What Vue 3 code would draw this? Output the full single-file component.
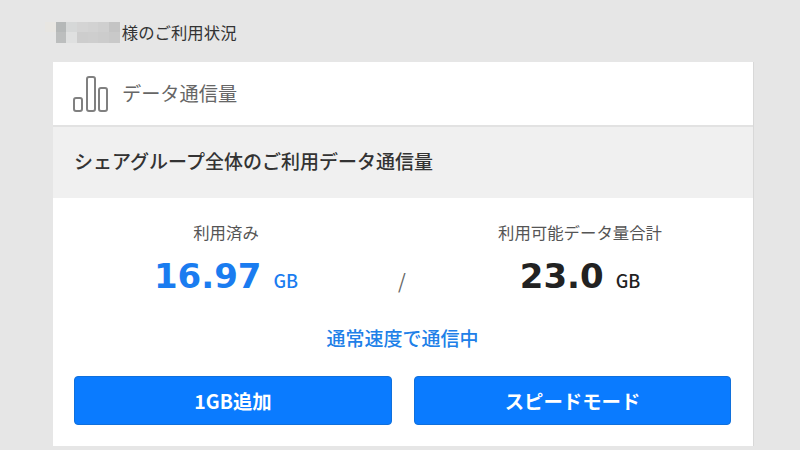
<template>
  <div class="page">
    <div class="user-line">
      <div class="mosaic">
        <span v-for="(c, i) in mosaic" :key="i" :style="{ background: c }"></span>
      </div>
      <span class="user-text">様のご利用状況</span>
    </div>

    <div class="card">
      <div class="card-head">
        <svg class="bars" width="36" height="36" viewBox="0 0 36 36" fill="none" stroke="#808080" stroke-width="2">
          <rect x="1" y="22" width="8" height="13" rx="2" />
          <rect x="14" y="1" width="8" height="34" rx="2" />
          <rect x="26" y="12" width="8" height="23" rx="2" />
        </svg>
        <span class="head-title">データ通信量</span>
      </div>

      <div class="band">シェアグループ全体のご利用データ通信量</div>

      <div class="body">
        <div class="stats">
          <div class="stat">
            <div class="stat-label">利用済み</div>
            <div class="stat-value used">16.97<small>GB</small></div>
          </div>
          <div class="slash">/</div>
          <div class="stat">
            <div class="stat-label">利用可能データ量合計</div>
            <div class="stat-value">23.0<small>GB</small></div>
          </div>
        </div>
        <div class="speed">通常速度で通信中</div>
        <div class="buttons">
          <button class="btn">1GB追加</button>
          <button class="btn">スピードモード</button>
        </div>
      </div>
    </div>
  </div>
</template>

<script setup>
const mosaic = [
  '#e8e6e2', '#b5b8b8', '#d6d8d8', '#d4d4d4', '#d2d2d2', '#cfcfcf', '#c4c4c4',
  '#e6e6e6', '#bcbebe', '#dfe0e0', '#cdcdcd', '#cecece', '#cccccc', '#c9c9c9'
]
</script>

<style>
html,
body {
  margin: 0;
  background: #e6e6e6;
}
</style>

<style scoped>
.page {
  width: 800px;
  height: 450px;
  overflow: hidden;
  box-sizing: border-box;
  padding-top: 21px;
  background: #e6e6e6;
  font-family: "Noto Sans CJK JP", "Liberation Sans", sans-serif;
  color: #333;
}

.user-line {
  display: flex;
  align-items: center;
  height: 22px;
  padding-left: 45px;
  margin-bottom: 19px;
}

.mosaic {
  display: grid;
  grid-template-columns: repeat(7, 10.7px);
  grid-template-rows: repeat(2, 10.5px);
  filter: blur(0.6px);
}

.user-text {
  font-size: 16.4px;
  margin-left: 2px;
}

.card {
  width: 700px;
  margin-left: 53px;
  background: #fff;
  box-shadow: 1px 0 0 #d8d8d8;
}

.card-head {
  display: flex;
  align-items: center;
  height: 65px;
  padding-left: 20px;
  box-sizing: border-box;
  border-bottom: 2px solid #e2e2e2;
}

.bars {
  margin-right: 13px;
  margin-top: 1px;
}

.head-title {
  font-size: 19.2px;
  margin-top: -2px;
  color: #666;
}

.band {
  height: 71px;
  padding-left: 21px;
  padding-bottom: 3px;
  box-sizing: border-box;
  background: #f0f0f0;
  font-size: 19px;
  font-weight: 500;
  line-height: 68px;
  color: #333;
}

.body {
  height: 248px;
  padding: 0 22px 0 21px;
  box-sizing: border-box;
}

.stats {
  display: grid;
  grid-template-columns: 304px 50px 304px;
  padding-top: 22px;
}

.stat {
  text-align: center;
}

.stat-label {
  font-size: 16.4px;
  line-height: 24px;
  color: #555;
}

.stat-value {
  font-family: "DejaVu Sans", sans-serif;
  font-size: 34px;
  font-weight: 700;
  line-height: 46px;
  margin-top: 9px;
  color: #222;
}

.stat-value small {
  font-family: "Noto Sans CJK JP", sans-serif;
  font-size: 18px;
  font-weight: 500;
  margin-left: 12px;
}

.used {
  color: #1a7cf0;
}

.slash {
  padding-top: 46px;
  padding-right: 2px;
  text-align: center;
  font-size: 20px;
  line-height: 30px;
  color: #666;
}

.speed {
  margin-top: 22px;
  text-align: center;
  font-size: 19px;
  font-weight: 500;
  line-height: 26px;
  color: #2080e8;
}

.buttons {
  display: grid;
  grid-template-columns: 318px 317px;
  gap: 22px;
  margin-top: 25px;
}

.btn {
  height: 49px;
  border: 1px solid #1070dc;
  border-radius: 4px;
  background: #0a7bff;
  color: #fff;
  font-family: inherit;
  font-size: 19.4px;
  font-weight: 700;
}
</style>
